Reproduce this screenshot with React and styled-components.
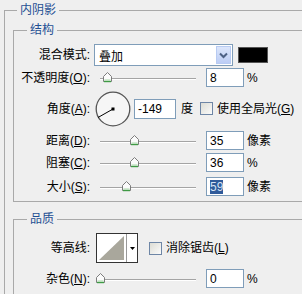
import React from 'react';
import styled, { createGlobalStyle } from 'styled-components';

const GlobalStyle = createGlobalStyle`
  html, body {
    margin: 0;
    padding: 0;
    background: #efefef;
    overflow: hidden;
  }
  body {
    font-family: "Liberation Sans", "Noto Sans CJK SC", sans-serif;
    font-size: 12px;
    color: #000;
  }
`;

const Page = styled.div`
  width: 302px;
  height: 294px;
  overflow: hidden;
  padding: 3px 0 0 4px;
  box-sizing: border-box;
`;

const Group = styled.fieldset`
  margin: ${p => p.$mt || 0}px 0 0 ${p => p.$ml || 0}px;
  padding: ${p => p.$pt || 0}px 0 ${p => p.$pb || 0}px 0;
  border: 1px solid #a9a9a9;
  width: ${p => p.$w}px;
  min-width: 0;
  box-sizing: border-box;
`;

const Legend = styled.legend`
  margin-left: ${p => p.$ml}px;
  padding: 0 3px;
  color: #1f4f93;
  font-size: 12px;
  line-height: 14px;
`;

const Row = styled.div`
  display: flex;
  align-items: center;
  height: ${p => p.$h}px;
  margin-top: ${p => p.$mt || 0}px;
`;

const Label = styled.div`
  width: 76px;
  flex: none;
  text-align: right;
  white-space: nowrap;
  line-height: 14px;
`;

const Select = styled.div`
  margin-left: 4px;
  width: 139px;
  height: 22px;
  box-sizing: border-box;
  border: 1px solid #7f9db9;
  background: #fff;
  display: flex;
  align-items: center;
  justify-content: space-between;
  padding: 0 1px 0 4px;
`;

const DropButton = styled.div`
  width: 15px;
  height: 18px;
  box-sizing: border-box;
  border: 1px solid #b8cbf2;
  background: linear-gradient(#dce6fb, #bccdf5);
  display: flex;
  align-items: center;
  justify-content: center;
`;

const Swatch = styled.div`
  margin-left: 5px;
  width: 30px;
  height: 16px;
  background: #000;
  border: 1px solid #555;
  box-sizing: border-box;
`;

const SliderBox = styled.div`
  position: relative;
  margin-left: 6px;
  width: 106px;
  height: 19px;
  flex: none;
`;

const Track = styled.div`
  position: absolute;
  left: 4px;
  right: 6px;
  top: 10px;
  height: 1px;
  background: #a4a4a4;
  border-bottom: 1px solid #fff;
`;

const ThumbWrap = styled.div`
  position: absolute;
  top: 4px;
  width: 11px;
  height: 11px;
`;

const Field = styled.div`
  margin-left: ${p => p.$ml ?? 4}px;
  width: ${p => p.$w || 38}px;
  height: ${p => p.$h || 19}px;
  box-sizing: border-box;
  border: 1px solid #7f9db9;
  background: #fff;
  padding-left: 3px;
  display: flex;
  align-items: center;
  font-size: 12px;
`;

const Selected = styled.span`
  background: #2f5a9a;
  color: #d6e2f5;
  line-height: 14px;
`;

const Unit = styled.div`
  margin-left: ${p => p.$ml ?? 3}px;
  white-space: nowrap;
  line-height: 14px;
`;

const Dial = styled.svg`
  margin-left: 5px;
  flex: none;
`;

const Check = styled.div`
  margin-left: ${p => p.$ml}px;
  width: 13px;
  height: 13px;
  flex: none;
  box-sizing: border-box;
  border: 1px solid #6e86a6;
  background: linear-gradient(135deg, #dcdcd4, #fbfbfb);
`;

const CheckText = styled.div`
  margin-left: 4px;
  white-space: nowrap;
  line-height: 14px;
`;

const Contour = styled.div`
  margin-left: 6px;
  width: 42px;
  height: 30px;
  box-sizing: border-box;
  border: 1px solid #333;
  background: #fff;
  display: flex;
`;

const ContourArrow = styled.div`
  flex: 1;
  border-left: 1px solid #999;
  display: flex;
  align-items: center;
  justify-content: center;
`;

function Slider({ pos }) {
  return (
    <SliderBox>
      <Track />
      <ThumbWrap style={{ left: 4 + pos - 5 }}>
        <svg width="11" height="11" viewBox="0 0 11 11">
          <path d="M1.5 4.5 L5.5 0.5 L9.5 4.5 V9.5 H1.5 Z" fill="#fbfbfb" stroke="#7c7c7c" />
          <path d="M2 9.5 H9" stroke="#3f9a45" strokeWidth="1.4" />
          <path d="M2.5 8 H8.5" stroke="#a8d8a8" />
        </svg>
      </ThumbWrap>
    </SliderBox>
  );
}

export default function App() {
  return (
    <Page>
      <GlobalStyle />
      <Group $w={330} $pb={20}>
        <Legend $ml={12}>内阴影</Legend>
        <Group $w={314} $mt={6} $ml={8} $pt={7} $pb={5}>
          <Legend $ml={13}>结构</Legend>
          <Row $h={22}>
            <Label>混合模式:</Label>
            <Select>
              <span>叠加</span>
              <DropButton>
                <svg width="9" height="7" viewBox="0 0 9 7">
                  <path d="M1 1.5 L4.5 5 L8 1.5" fill="none" stroke="#4d6185" strokeWidth="2" />
                </svg>
              </DropButton>
            </Select>
            <Swatch />
          </Row>
          <Row $h={19} $mt={2}>
            <Label>不透明度(<u>O</u>):</Label>
            <Slider pos={7} />
            <Field>8</Field>
            <Unit>%</Unit>
          </Row>
          <Row $h={35} $mt={4}>
            <Label>角度(<u>A</u>):</Label>
            <Dial width="36" height="36" viewBox="0 0 36 36">
              <circle cx="18" cy="18" r="16.8" fill="#f6f6f6" stroke="#555" strokeWidth="1.3" />
              <line x1="18" y1="18" x2="3" y2="26.5" stroke="#000" strokeWidth="1" />
              <rect x="16.5" y="16.5" width="3" height="3" fill="#000" />
            </Dial>
            <Field $w={42} $h={20} $ml={3}>-149</Field>
            <Unit $ml={5}>度</Unit>
            <Check $ml={7} />
            <CheckText>使用全局光(<u>G</u>)</CheckText>
          </Row>
          <Row $h={19} $mt={5}>
            <Label>距离(<u>D</u>):</Label>
            <Slider pos={34} />
            <Field>35</Field>
            <Unit>像素</Unit>
          </Row>
          <Row $h={19} $mt={3}>
            <Label>阻塞(<u>C</u>):</Label>
            <Slider pos={34} />
            <Field>36</Field>
            <Unit>%</Unit>
          </Row>
          <Row $h={19} $mt={5}>
            <Label>大小(<u>S</u>):</Label>
            <Slider pos={26} />
            <Field><Selected>59</Selected></Field>
            <Unit>像素</Unit>
          </Row>
        </Group>
        <Group $w={314} $mt={10} $ml={8} $pt={7} $pb={10}>
          <Legend $ml={13}>品质</Legend>
          <Row $h={30}>
            <Label>等高线:</Label>
            <Contour>
              <svg width="29" height="28" viewBox="0 0 29 28">
                <rect x="0" y="0" width="29" height="28" fill="#fff" />
                <path d="M2 26 L27 2 V26 Z" fill="#a9a79c" />
                <rect x="1.5" y="1.5" width="26" height="25" fill="none" stroke="#fff" />
              </svg>
              <ContourArrow>
                <svg width="5" height="3" viewBox="0 0 5 3">
                  <path d="M0 0 H5 L2.5 3 Z" fill="#000" />
                </svg>
              </ContourArrow>
            </Contour>
            <Check $ml={11} />
            <CheckText>消除锯齿(<u>L</u>)</CheckText>
          </Row>
          <Row $h={19} $mt={6}>
            <Label>杂色(<u>N</u>):</Label>
            <Slider pos={0} />
            <Field>0</Field>
            <Unit>%</Unit>
          </Row>
        </Group>
      </Group>
    </Page>
  );
}
